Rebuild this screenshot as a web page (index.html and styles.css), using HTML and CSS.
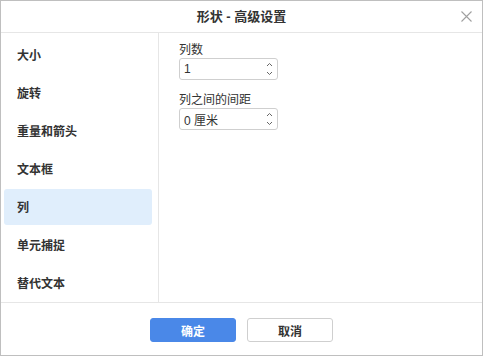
FILE: index.html
```html
<!DOCTYPE html>
<html lang="zh">
<head>
<meta charset="utf-8">
<link rel="stylesheet" href="styles.css">
</head>
<body>
<div class="dialog">
  <div class="header">
    <div class="title">形状 - 高级设置</div>
    <svg class="close" width="11" height="11" viewBox="0 0 11 11"><path d="M0.5 0.5L10.5 10.5M10.5 0.5L0.5 10.5" stroke="#a0a0a0" stroke-width="1.1" fill="none"/></svg>
  </div>
  <div class="body">
    <div class="sidebar">
      <div class="item">大小</div>
      <div class="item">旋转</div>
      <div class="item">重量和箭头</div>
      <div class="item">文本框</div>
      <div class="item active">列</div>
      <div class="item">单元捕捉</div>
      <div class="item">替代文本</div>
    </div>
    <div class="panel">
      <div class="group">
        <div class="label">列数</div>
        <div class="spin"><span class="val">1</span><span class="arrows"><svg width="7" height="16" viewBox="0 0 7 16"><path d="M1 5L3.5 2.5L6 5M1 11L3.5 13.5L6 11" stroke="#666" stroke-width="1" fill="none"/></svg></span></div>
      </div>
      <div class="group">
        <div class="label">列之间的间距</div>
        <div class="spin"><span class="val">0 厘米</span><span class="arrows"><svg width="7" height="16" viewBox="0 0 7 16"><path d="M1 5L3.5 2.5L6 5M1 11L3.5 13.5L6 11" stroke="#666" stroke-width="1" fill="none"/></svg></span></div>
      </div>
    </div>
  </div>
  <div class="footer">
    <button class="btn primary">确定</button>
    <button class="btn">取消</button>
  </div>
</div>
</body>
</html>
```
FILE: styles.css
```css
* { box-sizing: border-box; }
body {
  margin: 0;
  font-family: "Liberation Sans", "Noto Sans CJK SC", sans-serif;
  color: #333;
  background: #fff;
}
.dialog {
  width: 483px;
  height: 356px;
  border: 1px solid #bfbfbf;
  display: flex;
  flex-direction: column;
  background: #fff;
}
.header {
  height: 32px;
  border-bottom: 1px solid #e6e6e6;
  display: flex;
  align-items: center;
  justify-content: center;
  position: relative;
  flex: none;
}
.title {
  font-size: 13px;
  font-weight: bold;
  color: #333;
  line-height: 16px;
}
.close {
  position: absolute;
  left: 460px;
  top: 10px;
}
.body {
  height: 269px;
  display: flex;
  flex: none;
}
.sidebar {
  width: 158px;
  border-right: 1px solid #e6e6e6;
  padding: 4px 0 0 3px;
  display: flex;
  flex-direction: column;
  gap: 2px;
}
.item {
  width: 148px;
  height: 36px;
  line-height: 36px;
  padding: 1px 0 0 13px;
  font-size: 12px;
  font-weight: bold;
  color: #333;
  border-radius: 3px;
}
.item.active {
  background: #e0eefc;
}
.panel {
  padding: 9px 0 0 20px;
  display: flex;
  flex-direction: column;
  gap: 12px;
}
.label {
  font-size: 12px;
  line-height: 16px;
  color: #333;
}
.spin {
  width: 99px;
  height: 22px;
  border: 1px solid #cfcfcf;
  border-radius: 3px;
  display: flex;
  align-items: center;
  justify-content: space-between;
  padding: 0 4px 0 4px;
  font-size: 12px;
}
.arrows {
  display: flex;
  align-items: center;
}
.footer {
  flex: 1;
  border-top: 1px solid #e6e6e6;
  display: flex;
  justify-content: center;
  align-items: flex-start;
  padding-top: 15px;
  gap: 11px;
}
.btn {
  width: 86px;
  height: 24px;
  border: 1px solid #cfcfcf;
  border-radius: 3px;
  background: #fff;
  font-family: "Liberation Sans", "Noto Sans CJK SC", sans-serif;
  font-size: 12px;
  font-weight: bold;
  color: #333;
  padding: 0;
}
.btn.primary {
  background: #4a88e8;
  border-color: #4a88e8;
  color: #fff;
}
```
